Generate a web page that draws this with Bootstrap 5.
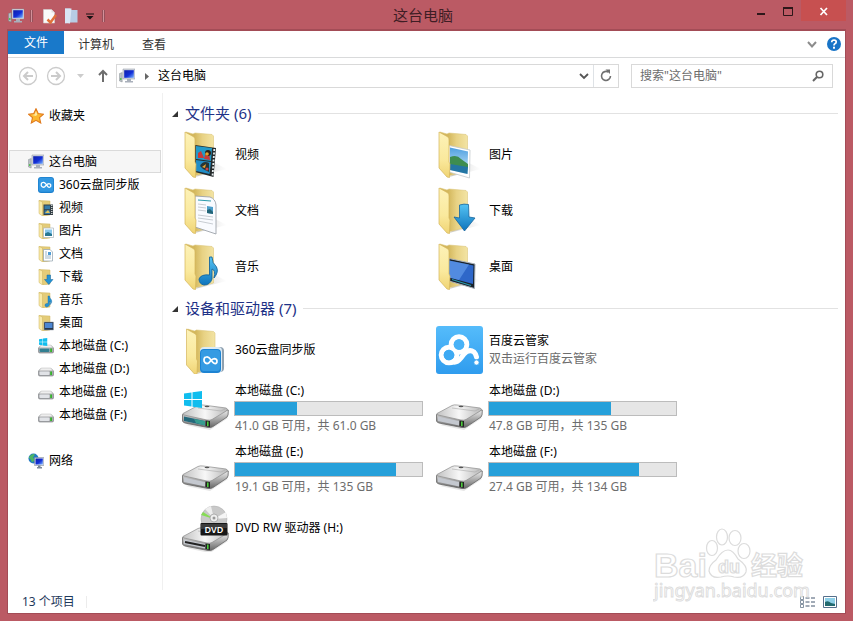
<!DOCTYPE html>
<html lang="zh-CN">
<head>
<meta charset="utf-8">
<meta name="viewport" content="width=device-width, initial-scale=1">
<title>这台电脑</title>
<link rel="stylesheet" href="https://cdn.jsdelivr.net/npm/bootstrap@5.3.0/dist/css/bootstrap.min.css">
<style>
body{background:#bb5a64;color:#000;font-family:"Noto Sans","Noto Sans CJK SC",sans-serif;font-size:12px;line-height:16px}
svg{display:block;flex:none}
a{color:inherit;text-decoration:none}
button{border:0;background:transparent;padding:0;color:inherit}
.i16{width:16px;height:16px}
.i48{width:48px;height:48px}
.win{min-height:100vh;padding:0 8px 8px}
.titlebar{height:30px;display:grid;grid-template-columns:1fr auto 1fr}
.titlebar h1{font-size:15px;line-height:30px;margin:0;padding-right:7px;color:#3f1d24}
.quick{height:30px;padding-top:2px}
.vbar{width:3px;height:12px;border:1px solid #96505a;border-width:0 1px;background:#d3919a;margin:0 10px 0 6px}
.close-btn{width:45px;height:21px;background:#c75050;margin-right:-1px}
.wbtn{width:28px;height:24px}
.client{background:#fff;border:1px solid #a34c56;border-width:1px 0 0;box-shadow:0 0 0 1px #a34c56}
.ribbon{height:27px;border-bottom:1px solid #d9dadb}
.tab-file{width:56px;height:23px;background:#1979ca;color:#fff;text-align:center;line-height:23px}
.tab-plain{line-height:27px;color:#333;padding:0 14px}
.addr{padding:6px 12px 5px 10px;height:35px;gap:12px}
.boxed{border:1px solid #d9d9d9;height:24px}
.place{padding-left:2px}
.search{width:202px}
.search input{border:0;outline:0;min-width:0;padding:0 0 0 8px;color:#444;background:transparent}
.search input::placeholder{color:#6d6d6d;opacity:1}
.side{width:155px;border-right:1px solid #f0f0f0;padding:11px 1px 0}
.side a{height:23px;border:1px solid transparent;padding-left:18px;gap:5px;white-space:nowrap}
.side a.sub{padding-left:28px}
.side a.cur{background:#f6f6f6;border-color:#dadada}
.gap-row{margin-bottom:23px}
.files{padding:7px 7px 0 9px}
.group-h{height:27px;font-size:15px;line-height:27px;margin:0;color:#1e3287;gap:7px;font-weight:400}
.group-h i{height:1px;background:#e2e2e2}
.tiles{display:grid;grid-template-columns:repeat(auto-fill,254px);padding-left:9px}
.tile{height:56px;gap:5px}
.drv{height:61px}
.tile .txt{padding-left:1px;line-height:18px}
.dim{color:#6d6d6d}
.space-bar{width:189px;height:15px;border:1px solid #bcbcbc;border-radius:0;background:#e6e6e6;margin:1px 0 1px -1px}
.space-bar .progress-bar{background:#26a0da}
.status{height:23px;padding:0 8px 0 14px;color:#1e395b}
.status .sep{width:1px;height:12px;background:#ececec;margin-left:11px}
.wmark{position:absolute;right:39px;bottom:16px;pointer-events:none}
</style>
<script src="https://cdn.jsdelivr.net/npm/bootstrap@5.3.0/dist/js/bootstrap.bundle.min.js"></script>
</head>
<body>
<svg width="0" height="0" class="position-absolute" aria-hidden="true">
<defs>
<linearGradient id="gF" x1="0" y1="0" x2="0" y2="1"><stop offset="0" stop-color="#fdf2b8"/><stop offset=".6" stop-color="#fae99d"/><stop offset="1" stop-color="#f0d474"/></linearGradient>
<linearGradient id="gB" x1="0" y1="0" x2="1" y2="0"><stop offset=".3" stop-color="#d3b75c"/><stop offset=".6" stop-color="#e8d284"/><stop offset="1" stop-color="#f3e4a4"/></linearGradient>
<linearGradient id="gBlue" x1="0" y1="0" x2="0" y2="1"><stop offset="0" stop-color="#55c3f3"/><stop offset="1" stop-color="#0d74bd"/></linearGradient>
<linearGradient id="gYun" x1="0" y1="0" x2="0" y2="1"><stop offset="0" stop-color="#55bcfb"/><stop offset="1" stop-color="#2f9cee"/></linearGradient>
<linearGradient id="gScr" x1="0" y1="0" x2="1" y2="1"><stop offset="0" stop-color="#1020a8"/><stop offset=".55" stop-color="#1230d8"/><stop offset="1" stop-color="#7ab4ff"/></linearGradient>
<linearGradient id="gTop" x1="0" y1="0" x2="1" y2="0"><stop offset="0" stop-color="#c2c2c2"/><stop offset=".5" stop-color="#f7f7f7"/><stop offset="1" stop-color="#b9b9b9"/></linearGradient>
<linearGradient id="gSide" x1="0" y1="0" x2="0" y2="1"><stop offset="0" stop-color="#eee"/><stop offset="1" stop-color="#666"/></linearGradient>
<linearGradient id="gShade" x1="0" y1="0" x2="1" y2="0"><stop offset="0" stop-color="#888" stop-opacity=".5"/><stop offset="1" stop-color="#bbb" stop-opacity="0"/></linearGradient>
<linearGradient id="gSky" x1="0" y1="0" x2="0" y2="1"><stop offset="0" stop-color="#4e9fe0"/><stop offset="1" stop-color="#d4eefb"/></linearGradient>
<symbol id="fback" viewBox="0 0 48 48"><path d="M14 46L46 38 34 32z" fill="url(#gShade)"/><path d="M5 1L12 3 14 2 31 3.500 32.500 5V40L13 45z" fill="url(#gB)" stroke="#dcc67a" stroke-width=".6"/></symbol>
<symbol id="ffront" viewBox="0 0 48 48"><path d="M4 1L13 6Q14 7 14 9V31L15 33 14.500 46.500 12 46 4 37z" fill="url(#gF)" stroke="#d4b45a" stroke-width=".7"/></symbol>
<symbol id="video" viewBox="0 0 48 48"><use href="#fback"/><path d="M14 14L35 17 32.500 46 14 41z" fill="#252a2b"/><path d="M15 15L31 17 30 30 15 28z" fill="#239ac8"/><path d="M15 29L30 31 28.500 43 15 40z" fill="#208dc6"/><path d="M17 22L20 20 23 27 17 27zM24 24L28 22 29 29 23 28z" fill="#c93a3a"/><circle cx="27" cy="22" r="3" fill="#2b2118"/><circle cx="26" cy="23" r="1.800" fill="#e9a32e"/><path d="M19 35Q22 29 28 32L28 41 22 38z" fill="#263536"/><path d="M21 36L25 33 24 37z" fill="#e8a432"/><circle cx="26" cy="38" r="1.500" fill="#c44"/><path d="M33.300 18L31.500 45" stroke="#e8eef0" stroke-width="1.800" stroke-dasharray="2 1.500"/><use href="#ffront"/></symbol>
<symbol id="pic" viewBox="0 0 48 48"><use href="#fback"/><path d="M14 14.500L35 19 34.500 47 14 41z" fill="#fff" stroke="#c3c9cc" stroke-width=".8"/><path d="M15 16.500L33 20.500 32.500 43 15 39z" fill="url(#gSky)"/><path d="M15 26Q22 23 26 28L33 33V37L15 34z" fill="#3e8d50"/><path d="M15 33L33 36 32.500 43 15 39z" fill="#2476a4"/><use href="#ffront"/></symbol>
<symbol id="doc" viewBox="0 0 48 48"><use href="#fback"/><path d="M14 9L29 10Q34.500 12 35 18V47L14 40z" fill="#f9fbff" stroke="#9da3aa" stroke-width=".9"/><path d="M17 13L30 14" stroke="#2d9bab" stroke-width="1.200"/><path d="M17 17L25 18M17 20L25 21M17 23L25 24M17 28L32 30M17 31L32 33M17 34L32 37" stroke="#c8cdd3" stroke-width="1"/><path d="M26 19L32 20V27L26 26z" fill="#4b9dc9"/><path d="M26 23L29 22 32 25V27L26 26z" fill="#226477"/><use href="#ffront"/></symbol>
<symbol id="down" viewBox="0 0 48 48"><use href="#fback"/><path d="M24.500 18Q29 16.500 33.500 17.500L34 30 40 31 29.500 44 19 30 24.500 31z" fill="url(#gBlue)" stroke="#16659c" stroke-width=".8"/><use href="#ffront"/></symbol>
<symbol id="music" viewBox="0 0 48 48"><use href="#fback"/><path d="M28.500 14H31Q31 20 35.500 24 38 29 33 35 35 27 31 26V36Q29 42 23 42 18 41 18 36 20 31 28.500 32z" fill="url(#gBlue)" stroke="#16659c" stroke-width=".9"/><use href="#ffront"/></symbol>
<symbol id="desk" viewBox="0 0 48 48"><use href="#fback"/><path d="M14 15.500L40 21 39.500 45.500 14 38z" fill="#19232b" stroke="#aab2bb" stroke-width="1"/><path d="M14 17.500L38.500 22.500 38 41 14 34.500z" fill="#2e67c9"/><path d="M14 17.500L34 21.500 24 37 14 34.500z" fill="#6aa3f0" opacity=".6"/><path d="M17 36.500L36 42.500" stroke="#2b99b0" stroke-width="1.200"/><use href="#ffront"/></symbol>
<symbol id="loop" viewBox="0 0 24 24"><path d="M4 13Q3 8 7 7.500 9.500 7 12 10.500L15 14.500Q18 17.500 20 14.500 21 10 17 9.500 14.500 9.500 12 12.500 9 17 6 15.500M4 13Q4.500 15 7 15.500" fill="none" stroke="#fff" stroke-width="2.200" stroke-linecap="round"/></symbol>
<symbol id="cloud360" viewBox="0 0 48 48"><g transform="translate(1.500 2)"><use href="#fback" width="48" height="48"/><use href="#ffront" width="48" height="48"/></g><rect x="20" y="21" width="23" height="25" rx="4" fill="#8fa1b0"/><rect x="19" y="21" width="22" height="26" rx="4" fill="#dceaf4"/><rect x="19" y="23" width="21" height="24" rx="4" fill="#1d83d2"/><rect x="20" y="24" width="19" height="21" rx="3" fill="#359be3"/><use href="#loop" x="20" y="25" width="19" height="19"/></symbol>
<symbol id="yun" viewBox="0 0 48 48"><rect x="1" width="47" height="48" rx="3" fill="url(#gYun)"/><g fill="none" stroke="#fff" stroke-width="5"><circle cx="14" cy="29" r="7.800"/><circle cx="24" cy="18.500" r="7.800"/><path d="M17 35.500Q21 38 26 32L29 28Q34 22.500 39 26 41 28 41.500 31" stroke-linecap="round"/></g><circle cx="14" cy="29" r="5.300" fill="#3eaaf3"/><circle cx="24" cy="18.500" r="5.300" fill="#48b2f7"/><circle cx="41.500" cy="36.500" r="2.600" fill="#fff" stroke="#3aa6f1" stroke-width=".8"/></symbol>
<symbol id="drive" viewBox="0 0 48 48"><path d="M5 40L29 45 47 33 40 27z" fill="#999" opacity=".25"/><path d="M1.500 29.500V36Q2 37.500 4 38L27 42.500Q30 43 32 41.500L46 32Q47.500 31 47.300 25z" fill="url(#gSide)" stroke="#666" stroke-width=".8"/><path d="M2 28.500L17 20.500Q19 19.500 22 20L45 23Q47.500 24 46 25.500L31 34.500Q29 35.500 26 35L3 30Q1 29.500 2 28.500z" fill="url(#gTop)" stroke="#8b8b8b" stroke-width=".7"/><path d="M3 31.500L24 36V40.500L3 36z" fill="#c4c8cf"/><path d="M17 23L40 26 44 24" fill="none" stroke="#aaa" stroke-width=".6"/><ellipse cx="26" cy="21.500" rx="2.500" ry=".8" fill="#555"/><path d="M24.500 35.500L29 36V42L24.500 41z" fill="#222"/><rect x="26" y="36.500" width="1.600" height="4.500" fill="#4ccb3c"/></symbol>
<symbol id="logo4" viewBox="0 0 18 17"><path d="M0 2.500L7.500 1.500V8H0zM8.500 1.300L18 0V8H8.500zM0 9H7.500V15.500L0 14.500zM8.500 9H18V17L8.500 15.700z" fill="#10bdee"/></symbol>
<symbol id="drivec" viewBox="0 0 48 48"><use href="#drive"/><path d="M3 31.500L24 36V40.500L3 36z" fill="#24697b"/><path d="M13 34L24 36V40.500L15 38z" fill="#379c90"/><use href="#logo4" x="3" y="6" width="18" height="17"/></symbol>
<symbol id="dvd" viewBox="0 0 48 48"><g transform="translate(0 4)"><use href="#drive" width="48" height="48"/><path d="M4 34L24 38" stroke="#222" stroke-width="1.800"/></g><circle cx="33" cy="15" r="13" fill="#c9c9c9" stroke="#aaa" stroke-width=".5"/><path d="M33 15L20 11 22 8z" fill="#86dc54"/><path d="M33 15L24 5 30 2z" fill="#eee"/><path d="M33 15L45 8 46 14z" fill="#f5f5f5"/><circle cx="33" cy="14" r="4" fill="#eee" stroke="#999" stroke-width=".7"/><circle cx="33" cy="14" r="1.500" fill="#999"/><rect x="19.500" y="19" width="27" height="12.500" rx="1" fill="#171717"/><path d="M20 20H46V24L20 25z" fill="#555" opacity=".6"/><text x="33" y="28.500" text-anchor="middle" font-family="Noto Sans,sans-serif" font-weight="600" font-size="9" fill="#fff">DVD</text></symbol>
<symbol id="pc" viewBox="0 0 16 16"><path d="M4 1H16V11H4z" fill="#d6dae4" stroke="#858c98" stroke-width=".5"/><path d="M5.200 2.200H14.800V9.800H5.200z" fill="url(#gScr)"/><path d="M8 11H12V13H14V14.500H6V13H8z" fill="#a9b0bb"/><path d="M.5 5.500L3.200 4.500V14L.5 13z" fill="#b9c0c6" stroke="#727a80" stroke-width=".4"/><rect x="1.200" y="10" width="1.200" height="2" fill="#42c238"/></symbol>
<symbol id="sf" viewBox="0 0 16 16"><path d="M1 .5L12 1V15L5 16z" fill="#e4cc78" stroke="#d0b662" stroke-width=".5"/><path d="M1 .500L4.500 2V16L1 13.500z" fill="#f8e9a8" stroke="#cdb25c" stroke-width=".5"/></symbol>
<symbol id="svideo" viewBox="0 0 16 16"><use href="#sf"/><path d="M5.500 4.500H15V15H5.500z" fill="#333f45"/><path d="M6.500 5.500H12V9.300H6.500zM6.500 10.300H12V14H6.500z" fill="#347aa8"/><path d="M7 13L10 10 12 13z" fill="#e2c55e"/><path d="M13.800 5V15" stroke="#eee" stroke-width="1.200" stroke-dasharray="1 1"/></symbol>
<symbol id="spic" viewBox="0 0 16 16"><use href="#sf"/><path d="M5.500 5H15.500V14.500H5.500z" fill="#fff" stroke="#aab4bc" stroke-width=".7"/><path d="M7 6.500H14V13H7z" fill="#89c8ed"/><path d="M7 10.500L10 9 14 11V13H7z" fill="#277793"/></symbol>
<symbol id="sdoc" viewBox="0 0 16 16"><use href="#sf"/><path d="M5.500 3.500H12L14.500 6V15H5.500z" fill="#fff" stroke="#8fa0ad" stroke-width=".7"/><path d="M7 6H9M7 8H9M7 10H13M7 12H13" stroke="#86a5bc" stroke-width=".8"/><path d="M10 6H13V9H10z" fill="#4f9cd4"/></symbol>
<symbol id="sdown" viewBox="0 0 16 16"><use href="#sf"/><path d="M9 6H12.500V10.500H15L10.800 15.500 6.500 10.500H9z" fill="#2493d3" stroke="#16659c" stroke-width=".5"/></symbol>
<symbol id="smusic" viewBox="0 0 16 16"><use href="#sf"/><path d="M10 4H11.500Q11.500 6 13.500 8 14.500 10 12.500 12.500 13 10 11.500 9V13Q10.500 15 8.500 15 6.500 14.500 7 12.500 8 11 10 11.500z" fill="#2493d3" stroke="#16659c" stroke-width=".4"/></symbol>
<symbol id="sdesk" viewBox="0 0 16 16"><use href="#sf"/><path d="M6 7H15.500V15H6z" fill="#26374d" stroke="#98a2ad" stroke-width=".5"/><path d="M7 8H14.500V13H7z" fill="#4c86d2"/></symbol>
<symbol id="s360" viewBox="0 0 16 16"><rect width="16" height="16" rx="3" fill="#1b7fcd"/><rect x=".700" y=".700" width="14.600" height="14" rx="2.500" fill="#3298e2"/><use href="#loop" x="1" y="1" width="14" height="14"/></symbol>
<symbol id="sdrive" viewBox="0 0 16 16"><path d="M3 7.500H13L15.500 10V14Q15.500 15 14 15H2Q.5 15 .5 14V10z" fill="#a7a9ad" stroke="#77797d" stroke-width=".6"/><path d="M3.200 7H12.800L15 9.800H1z" fill="#eee" stroke="#aaa" stroke-width=".4"/><rect x="1.500" y="10.500" width="10" height="3.500" rx="1" fill="#e1e3e7"/><rect x="12.200" y="10.500" width="1.800" height="3.500" fill="#35b52a"/></symbol>
<symbol id="sdrivec" viewBox="0 0 16 16"><use href="#sdrive"/><rect x="1.500" y="10.500" width="10" height="3.500" rx="1" fill="#327f91"/><use href="#logo4" x="1" y="0" width="8.500" height="8"/></symbol>
</defs>
</svg>

<div class="win d-flex flex-column">
<header class="titlebar">
  <div class="quick d-flex align-items-center">
    <svg class="i16"><use href="#pc"/></svg>
    <span class="vbar"></span>
    <button aria-label="属性"><svg width="14" height="16" viewBox="0 0 14 16"><path d="M.5 1.500H8.500L11.500 4.500V15H.5z" fill="#fafafa" stroke="#cfcfcf" stroke-width=".6"/><path d="M8.500 1.500V4.500H11.500" fill="#ddd"/><path d="M4.500 11.500L7.500 14.500 13 7" fill="none" stroke="#e0713a" stroke-width="2.500"/></svg></button>
    <button class="ms-2" aria-label="新建文件夹"><svg width="13" height="16" viewBox="0 0 13 16"><path d="M0 .5H5L6.500 2H12.500V14.500H5L0 15.500z" fill="#b7cce4"/><path d="M0 .5H6.500L5 15.500 0 15z" fill="#d9e6f4"/></svg></button>
    <button class="ms-2" aria-label="自定义快速访问工具栏"><svg width="8" height="8" viewBox="0 0 8 8"><path d="M0 2H8" stroke="#171113" stroke-width="1"/><path d="M.5 4H7.500L4 7.500z" fill="#171113"/></svg></button>
    <span class="vbar ms-2"></span>
  </div>
  <h1 class="fw-normal">这台电脑</h1>
  <div class="d-flex justify-content-end align-items-start">
    <button class="wbtn" aria-label="最小化"><svg width="28" height="24"><path d="M12 14H20" stroke="#2d171a" stroke-width="2"/></svg></button>
    <button class="wbtn" aria-label="最大化"><svg width="28" height="24"><path d="M10.500 15.500V8H19.500V15.500z" fill="none" stroke="#2d171a"/><path d="M10 8H20" stroke="#2d171a" stroke-width="2"/></svg></button>
    <button class="close-btn" aria-label="关闭"><svg width="45" height="21"><path d="M19.500 8L26 15M26 8L19.500 15" stroke="#fff" stroke-width="1.700"/></svg></button>
  </div>
</header>

<main class="client flex-grow-1 d-flex flex-column">
  <nav class="ribbon d-flex">
    <a href="#" class="tab-file">文件</a>
    <a href="#" class="tab-plain">计算机</a>
    <a href="#" class="tab-plain">查看</a>
    <div class="ms-auto d-flex align-items-center gap-2 pe-1">
      <button aria-label="展开功能区"><svg width="14" height="12"><path d="M3 4L7 8.500 11 4" fill="none" stroke="#8c8c8c" stroke-width="2"/></svg></button>
      <button aria-label="帮助"><svg width="14" height="14" viewBox="0 0 14 14"><circle cx="7" cy="7" r="7" fill="#1874c7"/><path d="M4.700 5.200Q4.800 3 7 3 9.300 3.200 9.200 5 9.200 6.100 7.900 6.800 7 7.300 7 8.500" fill="none" stroke="#fff" stroke-width="1.700"/><rect x="6" y="9.700" width="2" height="2" fill="#fff"/></svg></button>
    </div>
  </nav>

  <div class="addr d-flex align-items-center">
    <div class="d-flex align-items-center flex-grow-1">
      <button aria-label="后退"><svg width="20" height="20" viewBox="0 0 20 20"><g fill="none" stroke="#cbcbcb"><circle cx="10" cy="10" r="8.500" stroke-width="1.300"/><path d="M15 10H6M10 6L6 10 10 14" stroke-width="2"/></g></svg></button>
      <button class="ms-2" aria-label="前进"><svg width="20" height="20" viewBox="0 0 20 20"><g fill="none" stroke="#cbcbcb"><circle cx="10" cy="10" r="8.500" stroke-width="1.300"/><path d="M5 10H14M10 6L14 10 10 14" stroke-width="2"/></g></svg></button>
      <button class="ms-2" aria-label="最近的位置"><svg width="16" height="8"><path d="M3 2H10L6.500 6z" fill="#ccc"/></svg></button>
      <button class="ms-1" aria-label="上移"><svg width="18" height="16" viewBox="0 0 18 16"><path d="M9 14V3M5 7L9 3 13 7" fill="none" stroke="#6d6d6d" stroke-width="2"/></svg></button>
      <div class="boxed flex-grow-1 d-flex align-items-center ms-1 bg-white">
        <a href="#" class="place d-flex align-items-center gap-2"><svg class="i16"><use href="#pc"/></svg><svg width="7" height="9"><path d="M2 1L6 4.500 2 8z" fill="#666"/></svg>这台电脑</a>
        <button class="ms-auto pe-1" aria-label="以前的位置"><svg width="12" height="12"><path d="M3 4L7 8 11 4" fill="none" stroke="#555" stroke-width="1.800"/></svg></button>
        <button class="border-start h-100 ps-1 pe-1" aria-label="刷新"><svg width="16" height="16" viewBox="0 0 16 16"><path d="M10.500 4.200A4.500 4.500 0 1 0 12.500 8" fill="none" stroke="#707070" stroke-width="1.600"/><path d="M7.500 1.500H12V6z" fill="#707070"/></svg></button>
      </div>
    </div>
    <form class="boxed search d-flex align-items-center bg-white" role="search">
      <input class="flex-grow-1" type="search" aria-label="搜索" placeholder='搜索"这台电脑"'>
      <button class="pe-2" type="button" aria-label="搜索"><svg width="12" height="12" viewBox="0 0 12 12"><circle cx="7.500" cy="4.500" r="3.300" fill="none" stroke="#666" stroke-width="1.600"/><path d="M5.200 6.800L1 11" stroke="#666" stroke-width="2"/></svg></button>
    </form>
  </div>

  <div class="d-flex flex-grow-1">
    <nav class="side flex-shrink-0 d-flex flex-column" aria-label="导航窗格">
      <a href="#" class="d-flex align-items-center gap-row"><svg class="i16" viewBox="0 0 16 16"><path d="M8 .7L10.200 5.600 15.500 6.200 11.500 9.700 12.700 15 8 12.300 3.300 15 4.500 9.700 .5 6.200 5.800 5.600z" fill="#fcb82f" stroke="#e07a1d" stroke-width="1.100"/><path d="M8 3L9.300 6.600 8 8 4 7 6.500 6.500z" fill="#ffeaa0"/></svg>收藏夹</a>
      <a href="#" class="cur d-flex align-items-center"><svg class="i16"><use href="#pc"/></svg>这台电脑</a>
      <a href="#" class="sub d-flex align-items-center"><svg class="i16"><use href="#s360"/></svg>360云盘同步版</a>
      <a href="#" class="sub d-flex align-items-center"><svg class="i16"><use href="#svideo"/></svg>视频</a>
      <a href="#" class="sub d-flex align-items-center"><svg class="i16"><use href="#spic"/></svg>图片</a>
      <a href="#" class="sub d-flex align-items-center"><svg class="i16"><use href="#sdoc"/></svg>文档</a>
      <a href="#" class="sub d-flex align-items-center"><svg class="i16"><use href="#sdown"/></svg>下载</a>
      <a href="#" class="sub d-flex align-items-center"><svg class="i16"><use href="#smusic"/></svg>音乐</a>
      <a href="#" class="sub d-flex align-items-center"><svg class="i16"><use href="#sdesk"/></svg>桌面</a>
      <a href="#" class="sub d-flex align-items-center"><svg class="i16"><use href="#sdrivec"/></svg>本地磁盘 (C:)</a>
      <a href="#" class="sub d-flex align-items-center"><svg class="i16"><use href="#sdrive"/></svg>本地磁盘 (D:)</a>
      <a href="#" class="sub d-flex align-items-center"><svg class="i16"><use href="#sdrive"/></svg>本地磁盘 (E:)</a>
      <a href="#" class="sub d-flex align-items-center gap-row"><svg class="i16"><use href="#sdrive"/></svg>本地磁盘 (F:)</a>
      <a href="#" class="d-flex align-items-center"><svg class="i16" viewBox="0 0 16 16"><circle cx="5.500" cy="5.500" r="5" fill="#1f78c4"/><path d="M1 4Q4 0 7 1.500L5 4.500 7 7 4 9.500Q3 6 1 5z" fill="#4cb565"/><path d="M6.500 4.500H15.800V12.500H6.500z" fill="#e1e5ee" stroke="#717b8a" stroke-width=".5"/><path d="M7.500 5.500H14.800V11.500H7.500z" fill="url(#gScr)"/><path d="M10 12.500H12.500V14H14V15.500H9V14H10z" fill="#7a8898"/></svg>网络</a>
    </nav>

    <section class="files flex-grow-1">
      <h2 class="group-h d-flex align-items-center"><svg width="6" height="6"><path d="M6 0V6H0z" fill="#333"/></svg>文件夹 (6)<i class="flex-grow-1"></i></h2>
      <div class="tiles">
        <a href="#" class="tile d-flex align-items-center"><svg class="i48"><use href="#video"/></svg><span class="txt">视频</span></a>
        <a href="#" class="tile d-flex align-items-center"><svg class="i48"><use href="#pic"/></svg><span class="txt">图片</span></a>
        <a href="#" class="tile d-flex align-items-center"><svg class="i48"><use href="#doc"/></svg><span class="txt">文档</span></a>
        <a href="#" class="tile d-flex align-items-center"><svg class="i48"><use href="#down"/></svg><span class="txt">下载</span></a>
        <a href="#" class="tile d-flex align-items-center"><svg class="i48"><use href="#music"/></svg><span class="txt">音乐</span></a>
        <a href="#" class="tile d-flex align-items-center"><svg class="i48"><use href="#desk"/></svg><span class="txt">桌面</span></a>
      </div>
      <h2 class="group-h d-flex align-items-center"><svg width="6" height="6"><path d="M6 0V6H0z" fill="#333"/></svg>设备和驱动器 (7)<i class="flex-grow-1"></i></h2>
      <div class="tiles">
        <a href="#" class="tile d-flex align-items-center"><svg class="i48"><use href="#cloud360"/></svg><span class="txt">360云盘同步版</span></a>
        <a href="#" class="tile d-flex align-items-center"><svg class="i48"><use href="#yun"/></svg><span class="txt">百度云管家<br><span class="dim">双击运行百度云管家</span></span></a>
        <a href="#" class="tile drv d-flex align-items-center"><svg class="i48"><use href="#drivec"/></svg><div class="txt">本地磁盘 (C:)<div class="progress space-bar"><div class="progress-bar" style="width:33%"></div></div><span class="dim">41.0 GB 可用，共 61.0 GB</span></div></a>
        <a href="#" class="tile drv d-flex align-items-center"><svg class="i48"><use href="#drive"/></svg><div class="txt">本地磁盘 (D:)<div class="progress space-bar"><div class="progress-bar" style="width:65%"></div></div><span class="dim">47.8 GB 可用，共 135 GB</span></div></a>
        <a href="#" class="tile drv d-flex align-items-center"><svg class="i48"><use href="#drive"/></svg><div class="txt">本地磁盘 (E:)<div class="progress space-bar"><div class="progress-bar" style="width:86%"></div></div><span class="dim">19.1 GB 可用，共 135 GB</span></div></a>
        <a href="#" class="tile drv d-flex align-items-center"><svg class="i48"><use href="#drive"/></svg><div class="txt">本地磁盘 (F:)<div class="progress space-bar"><div class="progress-bar" style="width:80%"></div></div><span class="dim">27.4 GB 可用，共 134 GB</span></div></a>
        <a href="#" class="tile d-flex align-items-center"><svg class="i48"><use href="#dvd"/></svg><span class="txt">DVD RW 驱动器 (H:)</span></a>
      </div>
    </section>
  </div>

  <footer class="status d-flex align-items-center">
    <span>13 个项目</span><span class="sep"></span>
    <div class="ms-auto d-flex align-items-center gap-2">
      <button aria-label="详细信息"><svg width="15" height="12" viewBox="0 0 15 12"><path d="M.5 .5H3.500V3.500H.5zM.5 4.500H3.500V7.500H.5zM.5 8.500H3.500V11.500H.5z" fill="#fff" stroke="#68788c" stroke-width=".8"/><path d="M5.500 2H9.500M11 2H15M5.500 6H9.500M11 6H15M5.500 10H9.500M11 10H15" stroke="#44566e"/></svg></button>
      <button aria-label="大图标"><svg width="14" height="12" viewBox="0 0 14 12"><path d="M.5 .5H13.500V11.500H.5z" fill="#fff" stroke="#56708c"/><path d="M2 2H12V10H2z" fill="#8fd0e8"/><path d="M2 6Q5 4 8 7L12 8V10H2z" fill="#226a6f"/></svg></button>
    </div>
  </footer>
</main>
</div>

<svg class="wmark" width="161" height="78" viewBox="0 0 161 78" aria-hidden="true">
  <g fill="#fff" stroke="#dcdcdc" stroke-width="1.200" fill-opacity=".85">
    <text x="1" y="50" font-family="Liberation Sans,sans-serif" font-weight="700" font-size="34">Bai</text>
    <ellipse cx="59" cy="21" rx="5.500" ry="7.500"/><ellipse cx="69" cy="10" rx="5.500" ry="8"/><ellipse cx="82" cy="11" rx="6" ry="7.500"/><ellipse cx="91" cy="24" rx="6" ry="7.500"/>
    <path d="M75 23Q80 23 85 32 95 39 93 45 90 52 81 50 75 48 68 50 58 52 56 44 56 38 63 33 69 23 75 23z"/>
    <text x="65" y="46" font-family="Liberation Sans,sans-serif" font-weight="700" font-size="18">du</text>
    <text x="98" y="48" font-family="Noto Sans CJK SC,sans-serif" font-weight="700" font-size="26">经验</text>
    <text x="1" y="70" font-family="Noto Sans,sans-serif" font-size="18" stroke-width=".9">jingyan.baidu.com</text>
  </g>
</svg>
</body>
</html>
